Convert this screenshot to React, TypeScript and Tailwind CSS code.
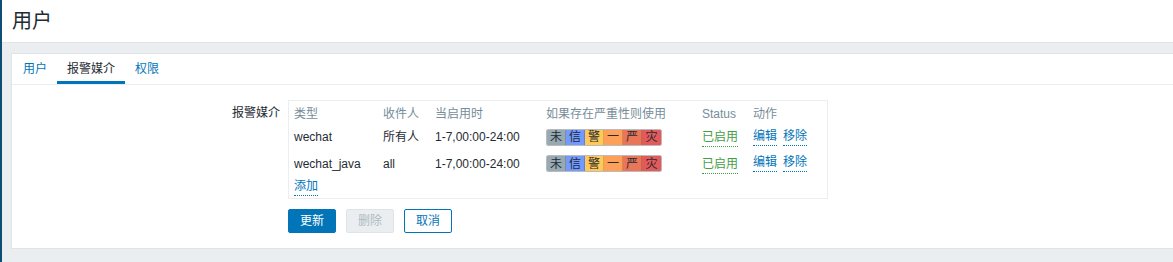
import React from "react";

const font = {
  fontFamily: '"Liberation Sans", Arial, "Noto Sans CJK SC", sans-serif',
};

const severities = [
  { label: "未", cls: "bg-[#97aab3]" },
  { label: "信", cls: "bg-[#7499ff]" },
  { label: "警", cls: "bg-[#ffc859]" },
  { label: "一", cls: "bg-[#ffa059]" },
  { label: "严", cls: "bg-[#e97659]" },
  { label: "灾", cls: "bg-[#e45959]" },
];

const media = [
  { type: "wechat", to: "所有人", when: "1-7,00:00-24:00" },
  { type: "wechat_java", to: "all", when: "1-7,00:00-24:00" },
];

function Severity() {
  return (
    <div className="flex h-[17px] w-fit overflow-hidden rounded-[2px] border border-[#8a8f92]/60">
      {severities.map((s, i) => (
        <span
          key={s.label}
          className={`${s.cls} flex w-[19px] items-center justify-center text-[12px] leading-none text-[#1f2c33] ${
            i < severities.length - 1 ? "border-r border-black/15" : ""
          }`}
        >
          {s.label}
        </span>
      ))}
    </div>
  );
}

function Link({ children, green }: { children: React.ReactNode; green?: boolean }) {
  return (
    <span
      className={`border-b border-dotted pb-[2px] leading-[14px] ${
        green ? "border-[#429e47] text-[#429e47]" : "border-[#0275b8] text-[#0275b8]"
      }`}
    >
      {children}
    </span>
  );
}

export default function App() {
  return (
    <div className="flex h-[262px] w-full bg-[#ebeef0] text-[12px] text-[#1f2c33]" style={font}>
      <div className="w-[2px] shrink-0 bg-[#0e4d74]" />
      <div className="flex min-w-0 flex-1 flex-col">
        {/* header */}
        <div className="flex h-[43px] items-center border-b border-[#dfe4e7] bg-white pl-[10px]">
          <h1 className="text-[20px] font-normal leading-none">用户</h1>
        </div>

        {/* panel */}
        <div className="ml-[9px] mt-[10px] h-[196px] border-y border-l border-[#dfe4e7] bg-white">
          <div className="flex h-[31px] items-end border-b border-[#ebeef0] pl-[1px]">
            {["用户", "报警媒介", "权限"].map((t) => (
              <div
                key={t}
                className={`flex h-full items-center px-[10px] pt-[2px] ${
                  t === "报警媒介"
                    ? "border-b-[3px] border-[#0275b8] text-[#1f2c33]"
                    : "border-b-[3px] border-transparent text-[#0275b8]"
                }`}
              >
                {t}
              </div>
            ))}
          </div>

          <div className="flex pt-[15px]">
            <div className="w-[276px] shrink-0 pr-[8px] pt-[4px] text-right">报警媒介</div>
            <div className="flex flex-col">
              <div className="w-[540px] border border-[#ebeef0] px-[5px] pb-[3px] pt-[3px]">
                <table className="w-full border-collapse text-left">
                  <thead>
                    <tr className="h-[20px] text-[#768d99]">
                      <th className="w-[89px] font-normal">类型</th>
                      <th className="w-[52px] font-normal">收件人</th>
                      <th className="w-[111px] font-normal">当启用时</th>
                      <th className="w-[156px] font-normal">如果存在严重性则使用</th>
                      <th className="w-[51px] font-normal">Status</th>
                      <th className="font-normal">动作</th>
                    </tr>
                  </thead>
                  <tbody>
                    {media.map((m, i) => (
                      <tr key={m.type} className={i === 0 ? "h-[26px]" : "h-[27px]"}>
                        <td>{m.type}</td>
                        <td>{m.to}</td>
                        <td>{m.when}</td>
                        <td>
                          <Severity />
                        </td>
                        <td>
                          <Link green>已启用</Link>
                        </td>
                        <td>
                          <span className="flex gap-[6px]">
                            <Link>编辑</Link>
                            <Link>移除</Link>
                          </span>
                        </td>
                      </tr>
                    ))}
                    <tr className="h-[17px]">
                      <td colSpan={6}>
                        <Link>添加</Link>
                      </td>
                    </tr>
                  </tbody>
                </table>
              </div>

              <div className="mt-[10px] flex gap-[10px]">
                <button className="h-[24px] w-[48px] rounded-[2px] border border-[#0275b8] bg-[#0275b8] text-white">
                  更新
                </button>
                <button className="h-[24px] w-[48px] rounded-[2px] border border-[#dfe4e7] bg-[#ebeef0] text-[#acbbc2]">
                  删除
                </button>
                <button className="h-[24px] w-[48px] rounded-[2px] border border-[#0275b8] bg-white text-[#0275b8]">
                  取消
                </button>
              </div>
            </div>
          </div>
        </div>
      </div>
    </div>
  );
}
